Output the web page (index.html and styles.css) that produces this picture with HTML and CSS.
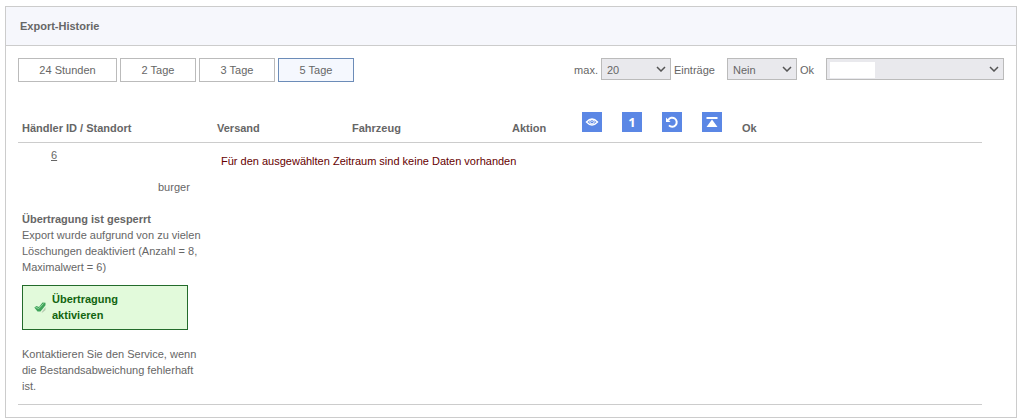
FILE: index.html
```html
<!DOCTYPE html>
<html lang="de">
<head>
<meta charset="utf-8">
<title>Export-Historie</title>
<link rel="stylesheet" href="styles.css">
</head>
<body>
<main class="panel">
  <h1 class="panel-title">Export-Historie</h1>
  <div class="panel-body">
    <form class="toolbar">
      <div class="ranges">
        <button type="button" class="range range-wide">24 Stunden</button>
        <button type="button" class="range">2 Tage</button>
        <button type="button" class="range">3 Tage</button>
        <button type="button" class="range active" aria-pressed="true">5 Tage</button>
      </div>
      <div class="filters">
        <label class="field">max.
          <span class="select select-short"><select><option>20</option><option>50</option></select><svg class="chevron" viewBox="0 0 10 6"><path d="M1 1l4 4 4-4"/></svg></span>
          Einträge</label>
        <label class="field">
          <span class="select select-short"><select><option>Nein</option><option>Ja</option></select><svg class="chevron" viewBox="0 0 10 6"><path d="M1 1l4 4 4-4"/></svg></span>
          Ok</label>
        <span class="select select-long"><select aria-label="Händler"><option></option></select><span class="blank"></span><svg class="chevron" viewBox="0 0 10 6"><path d="M1 1l4 4 4-4"/></svg></span>
      </div>
    </form>

    <table class="history">
      <colgroup>
        <col class="col-dealer"><col class="col-sent"><col class="col-vehicle"><col class="col-action">
        <col class="col-icon"><col class="col-icon"><col class="col-icon"><col class="col-icon"><col>
      </colgroup>
      <thead>
        <tr>
          <th scope="col">Händler ID / Standort</th>
          <th scope="col">Versand</th>
          <th scope="col">Fahrzeug</th>
          <th scope="col">Aktion</th>
          <th scope="col" class="icon-cell"><svg class="tile" viewBox="0 0 20 20" role="img" aria-label="Ansicht"><path class="line" d="M4.500 10Q10 4 15.500 10Q10 16 4.500 10z"/><circle class="line fine" cx="10" cy="9.700" r="2.200"/><circle class="solid" cx="10" cy="9.300" r="0.700"/></svg></th>
          <th scope="col" class="icon-cell"><span class="tile number">1</span></th>
          <th scope="col" class="icon-cell"><svg class="tile" viewBox="0 0 20 20" role="img" aria-label="Wiederholen"><path class="line thick" d="M6.300 8A4.500 4.500 0 1 1 7 13.400"/><path class="solid" d="M4 5.500v4.500h4.500z"/></svg></th>
          <th scope="col" class="icon-cell"><svg class="tile" viewBox="0 0 20 20" role="img" aria-label="Nach oben"><path class="solid" d="M4.500 5h11v2h-11zM10 7.500l5.500 7.500h-11z"/></svg></th>
          <th scope="col">Ok</th>
        </tr>
      </thead>
      <tbody>
        <tr>
          <td>
            <a class="dealer-id" href="#">6</a>
            <p class="location">burger</p>
            <strong class="locked">Übertragung ist gesperrt</strong>
            <p>Export wurde aufgrund von zu vielen Löschungen deaktiviert (Anzahl = 8, Maximalwert = 6)</p>
            <button type="button" class="activate">
              <svg class="check" viewBox="0 0 12 12"><path class="shade" d="M2 10l2 1.500h3.500L11.500 6v3l-3 2.500H4z"/><path class="tick" d="M.3 6.500L2.500 5l2.500 1L8.500 1.500l3 .3v2.500L6.500 10.500H3.500z"/><path class="shine" d="M1.500 6.300L4.800 7.500 9.500 2.500"/></svg>
              <span class="activate-text">Übertragung aktivieren</span>
            </button>
            <p>Kontaktieren Sie den Service, wenn die Bestandsabweichung fehlerhaft ist.</p>
          </td>
          <td colspan="8" class="empty">Für den ausgewählten Zeitraum sind keine Daten vorhanden</td>
        </tr>
      </tbody>
    </table>
  </div>
</main>
</body>
</html>
```
FILE: styles.css
```css
* { box-sizing: border-box; }

body {
  margin: 6px 8px 2px 5px;
  background: #fff;
  color: #666;
  font: 11px/16px "Liberation Sans", Arial, sans-serif;
}

p { margin: 0; }

.panel { border: 1px solid #ccc; }

.panel-title {
  margin: 0;
  padding: 11px 14px;
  border-bottom: 1px solid #ccc;
  background: #f6f7fc;
  font-size: 11px;
  line-height: 16px;
}

.panel-body { padding: 12px; }

.toolbar {
  display: flex;
  justify-content: space-between;
  margin-bottom: 29px;
}

.ranges { display: flex; gap: 3px; }

.range {
  width: 76px;
  height: 24px;
  padding: 0;
  border: 1px solid #bbb;
  background: #fff;
  color: #666;
  font: inherit;
}

.range-wide { width: 99px; }

.range.active {
  border-color: #6c8cb8;
  background: #f5f8fe;
}

.filters {
  display: flex;
  align-items: flex-start;
  gap: 12px;
  line-height: 24px;
}

.field {
  display: flex;
  gap: 3px;
}

.select {
  position: relative;
  display: block;
  height: 22px;
}

.select-short { width: 70px; }
.select-long { width: 178px; }

.select select {
  display: block;
  width: 100%;
  height: 22px;
  padding: 1px 5px 0;
  border: 1px solid #bbb;
  border-radius: 0;
  appearance: none;
  background: #e9e9ed;
  color: #666;
  font: inherit;
  line-height: 20px;
}

.chevron {
  position: absolute;
  top: 8px;
  right: 5px;
  width: 10px;
  height: 6px;
  fill: none;
  stroke: #555;
  stroke-width: 1.5;
  pointer-events: none;
}

.blank {
  position: absolute;
  top: 4px;
  left: 4px;
  width: 45px;
  height: 16px;
  background: #fff;
  pointer-events: none;
}

.history {
  width: calc(100% - 22px);
  border-collapse: collapse;
  table-layout: fixed;
}

.history tr { border-bottom: 1px solid #ccc; }

.history th,
.history td {
  padding: 4px 4px 10px;
  text-align: left;
  vertical-align: top;
}

.history th {
  height: 31px;
  padding: 0 4px 6px;
  vertical-align: bottom;
}

.col-dealer { width: 195px; }
.col-sent { width: 135px; }
.col-vehicle { width: 160px; }
.col-action { width: 70px; }
.col-icon { width: 40px; }

.history .icon-cell { padding-bottom: 10px; }

.tile {
  display: block;
  width: 20px;
  height: 20px;
  background: #5b87e5;
}

.number {
  color: #fff;
  font: bold 13px/20px "Noto Sans", sans-serif;
  text-align: center;
}

.line { fill: none; stroke: #fff; stroke-width: 1.4; }
.fine { stroke-width: 1; }
.thick { stroke-width: 2; }
.solid { fill: #fff; }

.dealer-id {
  display: block;
  width: fit-content;
  margin-left: 29px;
  color: #666;
}

.location {
  margin: 16px 0;
  padding-left: 136px;
}

.locked { display: block; }

.activate {
  display: flex;
  align-items: center;
  gap: 6px;
  width: 166px;
  height: 45px;
  margin: 10px 0 16px;
  padding: 0 11px;
  border: 1px solid #236b2b;
  background: #e2fadb;
  color: #11640f;
  font: inherit;
  font-weight: bold;
  text-align: left;
}

.activate-text { width: 90px; }

.check { width: 12px; height: 12px; }
.shade { fill: #b4c9af; }
.tick { fill: #3fa35a; }
.shine { fill: none; stroke: #91d89e; stroke-width: 1; }

.history .empty {
  padding: 10px 8px;
  color: #600;
}
```
